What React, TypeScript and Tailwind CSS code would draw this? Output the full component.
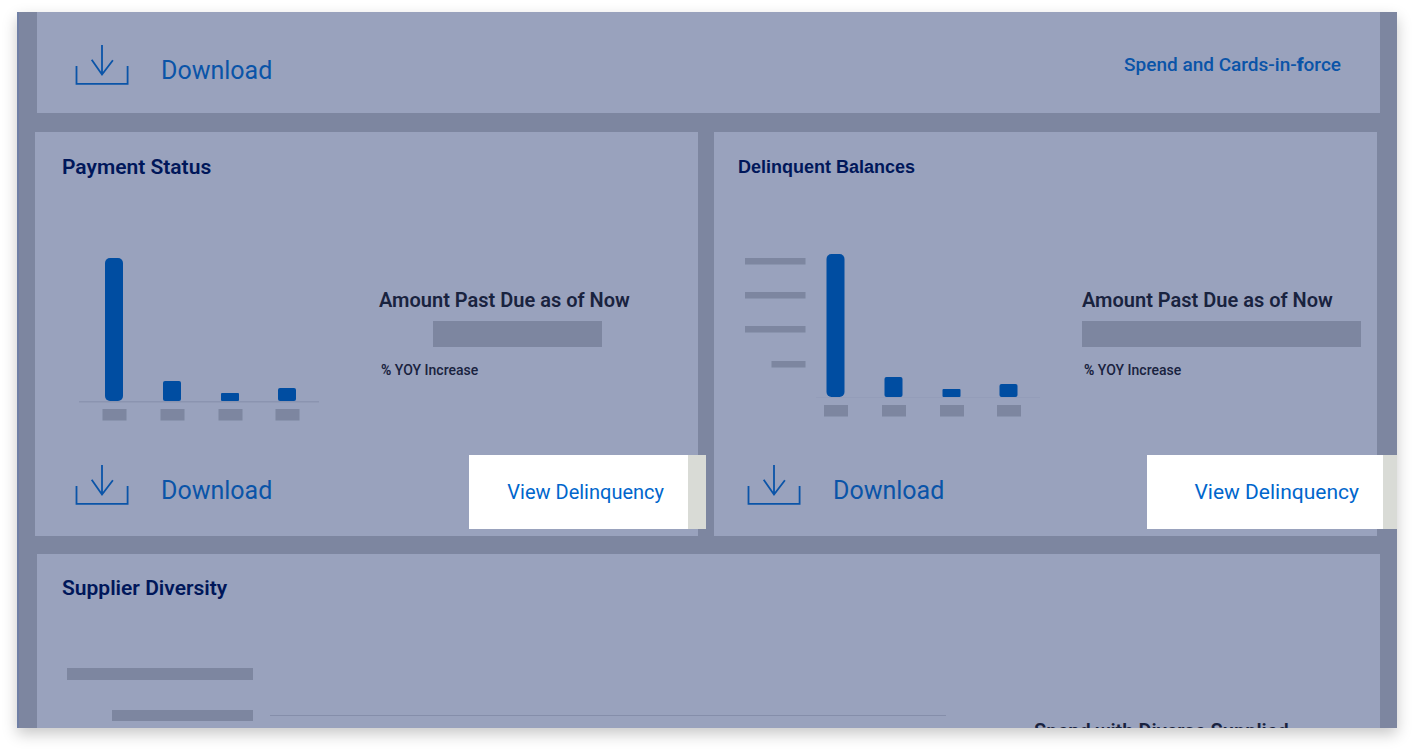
import React from 'react';

interface ChartBar {
  x: number;
  height: number;
  radius: number;
}

const BARS: ChartBar[] = [
  { x: 26, height: 143, radius: 5 },
  { x: 84, height: 20, radius: 2 },
  { x: 142, height: 8, radius: 1 },
  { x: 199, height: 13, radius: 2 },
];

const AXIS_LABELS = [
  { y: 4, width: 61 },
  { y: 38, width: 61 },
  { y: 72, width: 61 },
  { y: 107, width: 34 },
];

const DownloadButton: React.FC<{ className?: string }> = ({ className = '' }) => (
  <button type="button" className={`flex items-end text-[#0a54a8] ${className}`}>
    <svg width="54" height="40" viewBox="0 0 54 40" fill="none" stroke="currentColor" strokeWidth="1.8" aria-hidden="true">
      <path d="M1.5 21V38.8H52.6V21" />
      <path d="M27 0V29.5M16.7 14.8L27 29.5L37.9 15.2" />
    </svg>
    <span className="ml-8 text-[25px] leading-7">Download</span>
  </button>
);

const BarSet: React.FC = () => (
  <>
    {BARS.map((bar) => (
      <g key={bar.x}>
        <rect x={bar.x} y={143 - bar.height} width="18" height={bar.height} rx={bar.radius} fill="#004da1" />
        <rect x={bar.x - 2.5} y="151" width="24" height="11.5" fill="#7d86a0" />
      </g>
    ))}
  </>
);

const StatusChart: React.FC = () => (
  <svg className="mt-1 shrink-0" width="240" height="163" viewBox="0 0 240 163" role="img">
    <rect x="0" y="143" width="240" height="1.5" fill="#8b94b0" />
    <BarSet />
  </svg>
);

const BalancesChart: React.FC = () => (
  <svg className="shrink-0" width="295" height="163" viewBox="0 0 295 163" role="img">
    {AXIS_LABELS.map((label) => (
      <rect key={label.y} x={60.5 - label.width} y={label.y} width={label.width} height="6.5" fill="#7d86a0" />
    ))}
    <rect x="71" y="143" width="224" height="1" fill="#949db9" />
    <g transform="translate(55.5 0)">
      <BarSet />
    </g>
  </svg>
);

const PastDue: React.FC<{ className: string; barClassName: string }> = ({ className, barClassName }) => (
  <div className={`ml-auto shrink-0 pt-[34px] text-[#19233f] ${className}`}>
    <h3 className="whitespace-nowrap text-xl leading-6 font-semibold">Amount Past Due as of Now</h3>
    <div className={`mt-[9px] h-[26px] bg-[#7d86a0] ${barClassName}`} />
    <p className="mt-[13px] ml-[2px] text-sm leading-5 font-medium">
      <span className="font-bold">%</span> YOY Increase
    </p>
  </div>
);

const App: React.FC = () => {
  return (
    <div className="flex h-screen flex-col bg-white pt-3 pr-[23px] pb-7 pl-[17px] font-['Roboto',sans-serif]">
      <main className="flex min-h-0 flex-1 flex-col overflow-hidden border-l-2 border-[#7080a6] bg-[#7d86a0] shadow-[0_6px_14px_rgba(0,0,0,0.22)]">
        {/* Spend summary footer */}
        <section className="mr-[17px] ml-[18px] flex shrink-0 items-center justify-between bg-[#99a2bd] pt-[33px] pr-[39px] pb-7 pl-[38px]">
          <DownloadButton />
          <a href="#spend" className="text-[19px] leading-6 font-medium text-[#0a54a8]">
            Spend and Cards-in-<b className="font-black">f</b>orce
          </a>
        </section>

        <div className="mt-[19px] mr-5 ml-4 grid shrink-0 grid-cols-2 gap-4">
          {/* Payment Status */}
          <section className="relative bg-[#99a2bd] pt-[23px] pb-[31px]">
            <h2 className="ml-[27px] text-[21px] leading-6 font-semibold text-[#00175a]">Payment Status</h2>
            <div className="mt-[75px] flex items-start pl-11">
              <StatusChart />
              <PastDue className="mr-[65px] w-[254px]" barClassName="ml-[54px] w-[169px]" />
            </div>
            <DownloadButton className="mt-11 ml-10" />
            <a
              href="#payment-delinquency"
              className="absolute -right-2 bottom-[7px] flex h-[74px] w-[237px] items-center justify-end border-r-[18px] border-[#d9dbd6] bg-white pr-6 text-xl leading-6 text-[#0066cc]"
            >
              View Delinquency
            </a>
          </section>

          {/* Delinquent Balances */}
          <section className="relative bg-[#99a2bd] pt-[23px] pb-[31px]">
            <h2 className="ml-6 font-['Liberation_Sans',sans-serif] text-lg leading-6 font-bold text-[#00175a]">
              Delinquent Balances
            </h2>
            <div className="mt-[75px] flex items-start pl-[31px]">
              <BalancesChart />
              <PastDue className="mr-4 w-[279px]" barClassName="w-full" />
            </div>
            <DownloadButton className="mt-12 ml-[33px]" />
            <a
              href="#balance-delinquency"
              className="absolute -right-5 bottom-[7px] flex h-[74px] w-[250px] items-center justify-end border-r-[14px] border-[#d9dbd6] bg-white pr-6 text-[21px] leading-6 text-[#0066cc]"
            >
              View Delinquency
            </a>
          </section>
        </div>

        {/* Supplier Diversity */}
        <section className="mt-[18px] mr-[17px] ml-[18px] shrink-0 bg-[#99a2bd] pt-[22px] pb-10">
          <h2 className="ml-[25px] text-[21px] leading-6 font-semibold text-[#00175a]">Supplier Diversity</h2>
          <div className="mt-[68px] flex items-start pr-[86px] pl-[30px]">
            <div className="flex w-[186px] shrink-0 flex-col items-end gap-[30px]">
              <div className="h-3 w-full bg-[#7d86a0]" />
              <div className="h-[11px] w-[141px] bg-[#7d86a0]" />
            </div>
            <div className="mt-[47px] ml-[17px] h-px flex-1 bg-[#858eaa]" />
            <h3 className="mt-[51px] ml-[88px] w-[260px] shrink-0 text-xl leading-6 font-semibold whitespace-nowrap text-[#19233f]">
              Spend with Diverse Supplied
            </h3>
          </div>
        </section>
      </main>
    </div>
  );
};

export default App;
